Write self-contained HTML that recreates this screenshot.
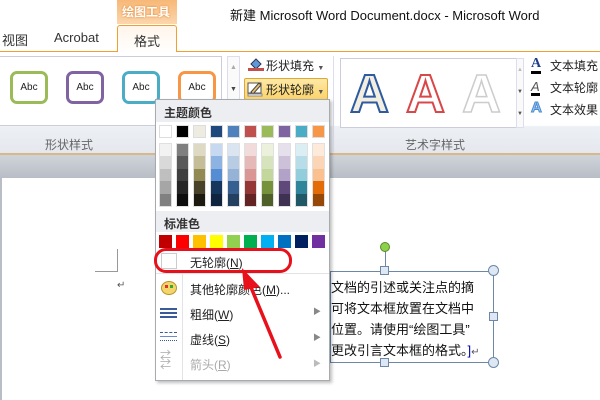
<!DOCTYPE html>
<html><head><meta charset="utf-8"><style>
*{margin:0;padding:0;box-sizing:border-box}
body{width:600px;height:400px;overflow:hidden;position:relative;background:#fff;font-family:"Liberation Sans","Noto Sans CJK SC",sans-serif;font-size:12px;color:#222}
.a{position:absolute}
.abc{position:absolute;width:38px;height:33px;border:3px solid;border-radius:7px;background:#fff;font-size:10px;text-align:center;line-height:27px;top:71px}
.sw{position:absolute;width:13px;height:13px}
.col{position:absolute;width:13px;top:143px;height:64px;border:1px solid #e0e0e0}
.col div{height:12.4px}
.mi{position:absolute;left:190px;font-size:12px}
</style></head><body>
<div class="a" style="left:0;top:0;width:600px;height:52px;background:#fff"></div>
<div class="a" style="left:117px;top:0;width:60px;height:24px;background:linear-gradient(#f7b877,#fbd6ad);"></div>
<div class="a" style="left:122px;top:3px;color:#fff;font-size:12px;font-weight:bold;text-shadow:0 0 2px #e07a20">绘图工具</div>
<div class="a" style="left:230px;top:5px;font-size:13px;color:#111">新建 Microsoft Word Document.docx  -  Microsoft Word</div>
<div class="a" style="left:2px;top:30px;font-size:13px;color:#333">视图</div>
<div class="a" style="left:54px;top:30px;font-size:13px;color:#333">Acrobat</div>
<div class="a" style="left:0;top:51px;width:600px;height:1px;background:#f0a030"></div>
<div class="a" style="left:117px;top:25px;width:60px;height:28px;background:linear-gradient(#fff5ea,#fff);border:1px solid #f0a030;border-bottom:none;border-radius:3px 3px 0 0"></div>
<div class="a" style="left:134px;top:31px;font-size:13px;color:#333">格式</div>
<div class="a" style="left:0;top:52px;width:600px;height:102px;background:linear-gradient(#fff 0,#fff 72%,#edf0f4 73%,#e4e8ee 100%)"></div>
<div class="a" style="left:0;top:56px;width:222px;height:70px;border:1px solid #ccd;border-left:none;background:#fff"></div>
<div class="abc" style="left:10px;border-color:#9bbb59">Abc</div>
<div class="abc" style="left:66px;border-color:#8064a2">Abc</div>
<div class="abc" style="left:122px;border-color:#4bacc6">Abc</div>
<div class="abc" style="left:178px;border-color:#f79646">Abc</div>
<div class="a" style="left:227px;top:56px;width:13px;height:46px;border:1px solid #dde;background:#fafafa;font-size:7px;color:#aaa;text-align:center;line-height:22px">▲<br><span style="color:#444">▼</span></div>
<div class="a" style="left:45px;top:136px;color:#666;font-size:12px">形状样式</div>
<div class="a" style="left:333px;top:56px;width:1px;height:96px;background:#dde"></div>
<div class="a" style="left:248px;top:56px;width:16px;height:16px"><svg width="16" height="16"><path d="M3 8l5-5 5 5-5 5z" fill="#5a9ad8" stroke="#335"/><rect x="0" y="12" width="16" height="3" fill="#c0504d"/></svg></div>
<div class="a" style="left:266px;top:57px;font-size:12px">形状填充 <span style="font-size:7px;color:#555">▼</span></div>
<div class="a" style="left:244px;top:78px;width:84px;height:22px;background:linear-gradient(#fde9a6,#fcd36a);border:1px solid #d9a93c;border-radius:2px"></div>
<div class="a" style="left:247px;top:81px"><svg width="16" height="16"><rect x="1" y="2" width="13" height="10" fill="#fff" stroke="#555"/><path d="M4 11l8-9 2 2-8 9z" fill="#e8c070" stroke="#444"/><rect x="1" y="13" width="14" height="2" fill="#fff" stroke="#888"/></svg></div>
<div class="a" style="left:266px;top:81px;font-size:12px">形状轮廓 <span style="font-size:7px;color:#555">▼</span></div>
<div class="a" style="left:340px;top:58px;width:177px;height:70px;border:1px solid #ccd;background:#fff"></div>
<div class="a" style="left:350px;top:62px;font-size:54px;font-weight:bold;color:#f3efe0;-webkit-text-stroke:2px #2d5aa0;line-height:64px">A</div>
<div class="a" style="left:406px;top:62px;font-size:54px;font-weight:bold;color:#fff;-webkit-text-stroke:2px #d84848;line-height:64px">A</div>
<div class="a" style="left:462px;top:62px;font-size:54px;font-weight:bold;color:#fff;-webkit-text-stroke:1.5px #ccc;line-height:64px">A</div>
<div class="a" style="left:516px;top:58px;width:8px;height:70px;border:1px solid #dde;background:#fafafa;font-size:6px;text-align:center;line-height:22px;color:#555"><span style="color:#bbb">▲</span><br>▼<br>▼</div>
<div class="a" style="left:531px;top:57px;font-size:14px;font-weight:bold;color:#1f3e8a;font-family:'Liberation Serif',serif;line-height:14px;border-bottom:3px solid #000">A</div>
<div class="a" style="left:550px;top:57px">文本填充</div>
<div class="a" style="left:531px;top:80px;font-size:13px;font-style:italic;color:#555;border-bottom:3px solid #000;line-height:13px">A</div>
<div class="a" style="left:550px;top:79px">文本轮廓</div>
<div class="a" style="left:531px;top:99px;font-size:15px;font-weight:bold;color:#9cc8f0;-webkit-text-stroke:1px #4a8ad0">A</div>
<div class="a" style="left:550px;top:101px">文本效果</div>
<div class="a" style="left:405px;top:136px;color:#666">艺术字样式</div>
<div class="a" style="left:0;top:153px;width:600px;height:2px;background:#d8b88a"></div>
<div class="a" style="left:0;top:155px;width:600px;height:23px;background:linear-gradient(#cfd3da,#b9bec6)"></div>
<div class="a" style="left:0;top:178px;width:2px;height:222px;background:#b9bec6"></div>
<div class="a" style="left:95px;top:249px;width:23px;height:23px;border-right:1px solid #999;border-bottom:1px solid #999"></div>
<div class="a" style="left:117px;top:280px;font-size:10px;color:#555">↵</div>
<div class="a" style="left:385px;top:247px;width:1px;height:24px;background:#6d87a6"></div>
<div class="a" style="left:380px;top:242px;width:10px;height:10px;border-radius:50%;background:#8dd04a;border:1px solid #5a8a2a"></div>
<div class="a" style="left:330px;top:271px;width:164px;height:92px;border:1px solid #6d87a6"></div>
<div class="a" style="left:331px;top:277px;font-size:13px;line-height:21px;color:#111;white-space:nowrap">文档的引述或关注点的摘<br>可将文本框放置在文档中<br>位置。请使用“绘图工具”<br>更改引言文本框的格式。<span style="color:#00a">]</span><span style="font-size:10px;color:#555">↵</span></div>
<div class="a" style="left:380px;top:266px;width:9px;height:9px;border:1px solid #6d87a6;background:#dde8f4"></div>
<div class="a" style="left:380px;top:358px;width:9px;height:9px;border:1px solid #6d87a6;background:#dde8f4"></div>
<div class="a" style="left:489px;top:312px;width:9px;height:9px;border:1px solid #6d87a6;background:#dde8f4"></div>
<div class="a" style="left:488px;top:265px;width:11px;height:11px;border-radius:50%;border:1px solid #6d87a6;background:#dde8f4"></div>
<div class="a" style="left:488px;top:357px;width:11px;height:11px;border-radius:50%;border:1px solid #6d87a6;background:#dde8f4"></div>
<div class="a" style="left:155px;top:99px;width:175px;height:282px;background:#fff;border:1px solid #a7abb0;box-shadow:2px 2px 3px rgba(0,0,0,.25)"></div>
<div class="a" style="left:156px;top:100px;width:173px;height:22px;background:#edeef1"></div>
<div class="a" style="left:164px;top:104px;font-weight:bold;color:#333">主题颜色</div>
<div class="a" style="left:156px;top:211px;width:173px;height:21px;background:#edeef1"></div>
<div class="a" style="left:164px;top:215px;font-weight:bold;color:#333">标准色</div>
<div id="sw"></div>
<div class="a" style="left:156px;top:273px;width:173px;height:1px;background:#e2e3e5"></div>
<div class="a" style="left:182px;top:274px;width:1px;height:106px;background:#e2e3e5"></div>
<div class="a" style="left:161px;top:253px;width:16px;height:16px;border:1px solid #ccc;background:#fff"></div>
<div class="mi" style="top:254px">无轮廓(<u>N</u>)</div>
<div class="a" style="left:161px;top:281px;width:16px;height:14px;border-radius:50%;background:#f4d56a;border:1px solid #b8942a"></div>
<div class="a" style="left:165px;top:285px;width:3px;height:3px;background:#d33"></div>
<div class="a" style="left:170px;top:285px;width:3px;height:3px;background:#3a3"></div>
<div class="mi" style="top:281px">其他轮廓颜色(<u>M</u>)...</div>
<div class="a" style="left:160px;top:308px;width:17px;height:2px;background:#3a5a9a;box-shadow:0 4px 0 #3a5a9a,0 8px 0 #3a5a9a"></div>
<div class="mi" style="top:306px">粗细(<u>W</u>)</div>
<div class="a" style="left:160px;top:332px;width:17px;height:1px;border-top:1px dashed #3a5a9a;box-shadow:0 4px 0 #6a8aca"></div>
<div class="a" style="left:160px;top:340px;width:17px;height:1px;border-top:1px dotted #3a5a9a"></div>
<div class="mi" style="top:331px">虚线(<u>S</u>)</div>
<div class="a" style="left:160px;top:352px;font-size:11px;color:#aaa;line-height:9px">⇄<br>⇄</div>
<div class="mi" style="top:356px;color:#aaa">箭头(<u>R</u>)</div>
<div class="a" style="left:313px;top:306px;font-size:8px;color:#888">▶</div>
<div class="a" style="left:313px;top:332px;font-size:8px;color:#888">▶</div>
<div class="a" style="left:313px;top:358px;font-size:8px;color:#bbb">▶</div>
<div class="a" style="left:154px;top:248px;width:138px;height:25px;border:3px solid #e8101a;border-radius:12px"></div>
<svg class="a" style="left:0;top:0" width="600" height="400"><line x1="280" y1="357" x2="250" y2="285" stroke="#e8101a" stroke-width="3.5" stroke-linecap="round"/><path d="M242 268 L260 287 L244 290 Z" fill="#e8101a"/></svg>
<script>
var th=[["#fff","#f2f2f2","#d9d9d9","#bfbfbf","#a6a6a6","#808080"],["#000","#7f7f7f","#595959","#3f3f3f","#262626","#0d0d0d"],["#eeece1","#ddd9c3","#c4bd97","#938953","#494429","#1d1b10"],["#1f497d","#c6d9f0","#8db3e2","#548dd4","#17365d","#0f243e"],["#4f81bd","#dbe5f1","#b8cce4","#95b3d7","#366092","#244061"],["#c0504d","#f2dcdb","#e5b9b7","#d99694","#953734","#632423"],["#9bbb59","#ebf1dd","#d7e3bc","#c3d69b","#76923c","#4f6128"],["#8064a2","#e5e0ec","#ccc1d9","#b2a2c7","#5f497a","#3f3151"],["#4bacc6","#dbeef3","#b7dde8","#92cddc","#31859b","#205867"],["#f79646","#fdeada","#fbd5b5","#fac08f","#e36c09","#974806"]];
var st=["#c00000","#ff0000","#ffc000","#ffff00","#92d050","#00b050","#00b0f0","#0070c0","#002060","#7030a0"];
var h="";
for(var i=0;i<10;i++){var x=159+i*17;
h+='<div class="sw" style="left:'+x+'px;top:125px;background:'+th[i][0]+';border:1px solid #ddd"></div>';
h+='<div class="col" style="left:'+x+'px">';for(var j=1;j<6;j++)h+='<div style="background:'+th[i][j]+'"></div>';h+='</div>';
h+='<div class="sw" style="left:'+x+'px;top:235px;background:'+st[i]+'"></div>';}
document.getElementById("sw").innerHTML=h;
</script>
</body></html>
